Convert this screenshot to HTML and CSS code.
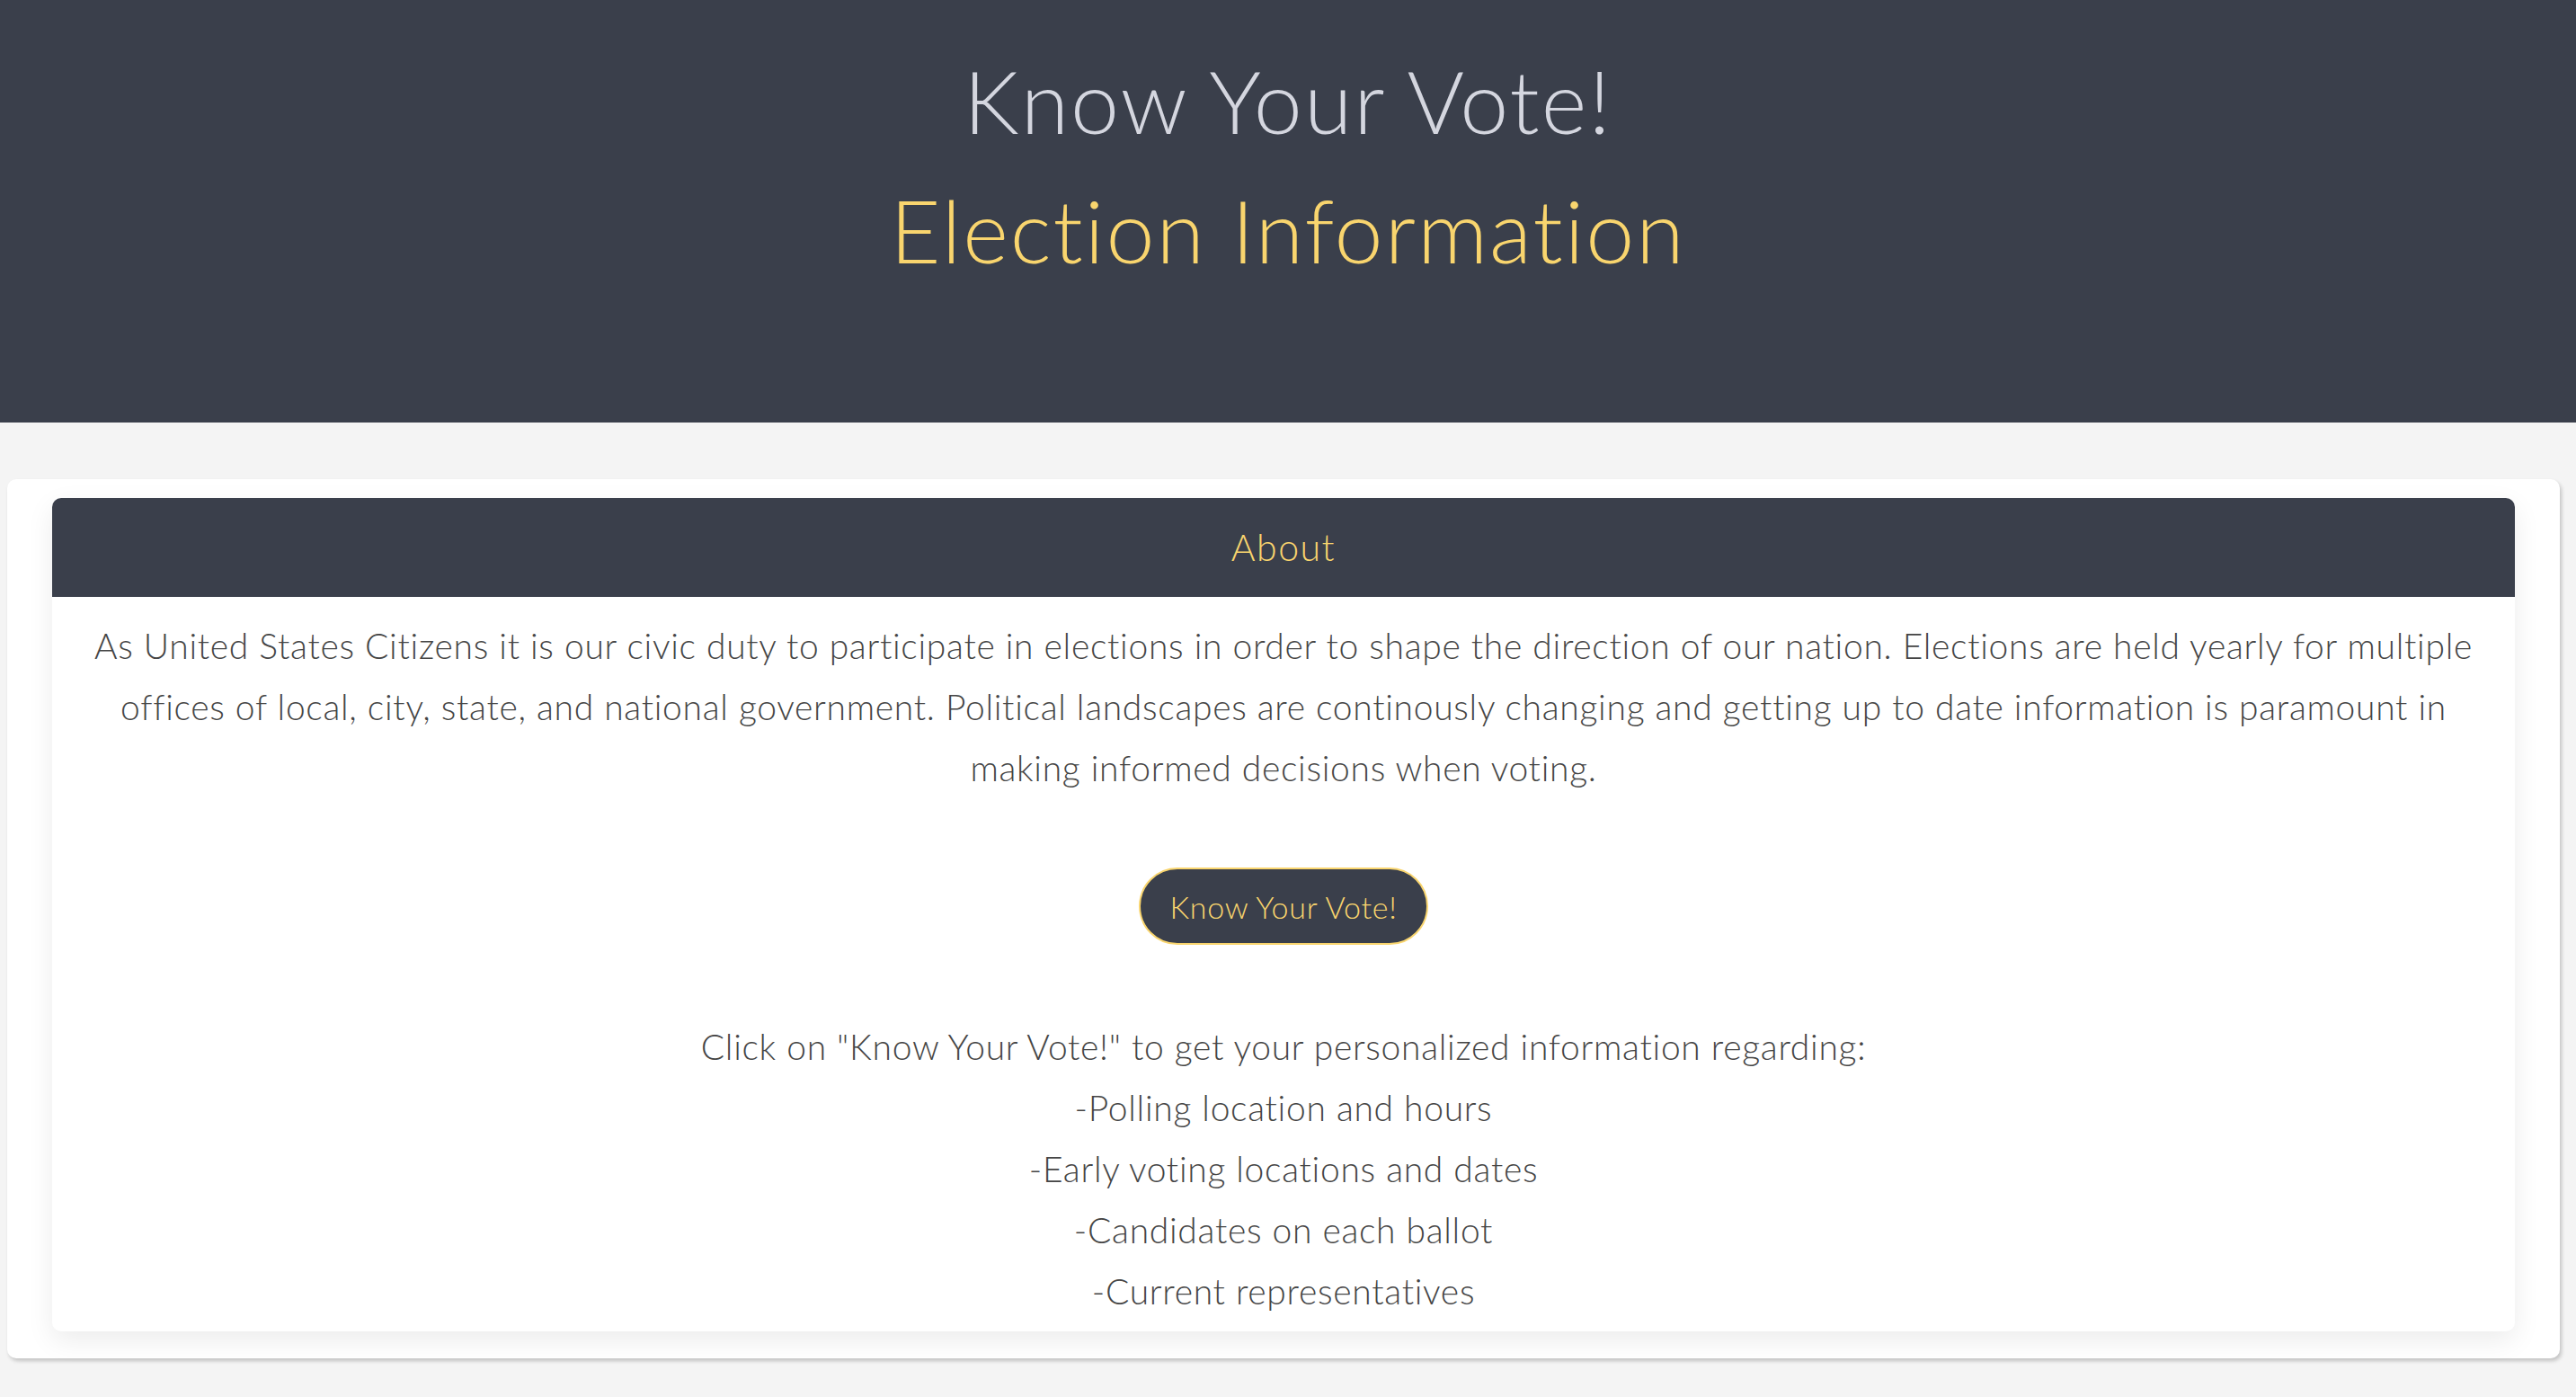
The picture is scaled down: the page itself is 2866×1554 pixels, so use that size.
FILE: index.html
```html
<!DOCTYPE html>
<html>
<head>
  <title>Know Your Vote!</title>
  <link rel="stylesheet" href="styles.css">
</head>
<body>
  <!-- Page banner -->
  <header class="banner">
    <h1 class="banner-title">Know Your Vote!</h1>
    <h2 class="banner-subtitle">Election Information</h2>
  </header>

  <!-- About card -->
  <main class="card">
    <section class="card-inner">
      <div class="card-header">About</div>
      <p class="about-text">As United States Citizens it is our civic duty to participate in elections in order to shape the direction of our nation. Elections are held yearly for multiple offices of local, city, state, and national government. Political landscapes are continously changing and getting up to date information is paramount in making informed decisions when voting.</p>
      <div class="button-row">
        <button class="vote-button">Know Your Vote!</button>
      </div>
      <ul class="info-list">
        <li>Click on "Know Your Vote!" to get your personalized information regarding:</li>
        <li>-Polling location and hours</li>
        <li>-Early voting locations and dates</li>
        <li>-Candidates on each ballot</li>
        <li>-Current representatives</li>
      </ul>
    </section>
  </main>
</body>
</html>
```

FILE: styles.css
```css
/* General body styles */
body {
  font-family: Lato, "Open Sans", sans-serif;
  font-weight: 300;
  font-variant-ligatures: none;
  background-color: #f4f4f4;
  color: #454545;
  margin: 0;
  padding: 0;
}

/* Top banner */
.banner {
  background-color: #3a3f4b;
  height: 470px;
  text-align: center;
  padding-top: 40px;
  box-sizing: border-box;
}

.banner-title,
.banner-subtitle {
  margin: 0;
  font-weight: 300;
  font-size: 97px;
  line-height: 144px;
  letter-spacing: 2px;
}

.banner-title {
  color: #d4d6df;
}

.banner-subtitle {
  color: #f9d56e;
}

/* Outer card */
.card {
  display: block;
  margin: 63px 18px 41px 8px;
  padding: 21px 50px 30px 50px;
  background: #ffffff;
  border-radius: 10px;
  box-shadow: 2px 3px 4px rgba(0, 0, 0, 0.2);
}

/* Inner card */
.card-inner {
  background: #ffffff;
  border-radius: 10px;
  box-shadow: 0 10px 30px rgba(0, 0, 0, 0.08);
  text-align: center;
  padding-bottom: 11px;
}

.card-header {
  background-color: #3a3f4b;
  color: #f9d56e;
  height: 110px;
  line-height: 110px;
  font-size: 41px;
  letter-spacing: 1.5px;
  border-radius: 10px 10px 0 0;
}

.about-text {
  margin: 20px 0 0 0;
  padding: 0 24px;
  font-size: 39px;
  line-height: 68px;
  letter-spacing: 0.7px;
}

.button-row {
  margin-top: 77px;
}

.vote-button {
  font-family: Lato, "Open Sans", sans-serif;
  font-weight: 300;
  background-color: #3a3f4b;
  color: #f9d56e;
  border: 2px solid #f9d56e;
  border-radius: 43px;
  height: 86px;
  padding: 0 32px;
  font-size: 34px;
  letter-spacing: 0.7px;
  cursor: pointer;
}

.info-list {
  list-style: none;
  margin: 79px 0 0 0;
  padding: 0;
  font-size: 39px;
  line-height: 68px;
  letter-spacing: 0.7px;
}
```
